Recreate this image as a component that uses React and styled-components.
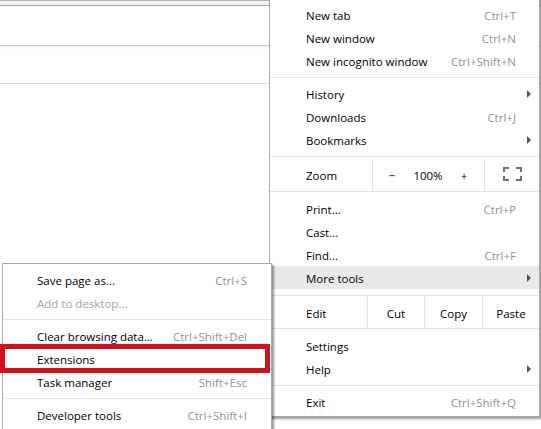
import styled, { createGlobalStyle } from "styled-components"

const GlobalStyle = createGlobalStyle`
    html, body {
        margin: 0;
        padding: 0;
        background: #fff;
    }
    body {
        width: 541px;
        height: 429px;
        overflow: hidden;
        font-family: "Open Sans", "Liberation Sans", sans-serif;
    }
`

const Screen = styled.div`
    position: relative;
    width: 541px;
    height: 429px;
    overflow: hidden;
    background: #fff;
`

const TabStrip = styled.div`
    height: 4px;
    background: #f2f2f2;
    border-top: 1px solid #b4b4b4;
    border-bottom: 1px solid #a4a4a4;
`

const Toolbar = styled.div`
    height: 39px;
    border-bottom: 1px solid #c6c6c6;
`

const BookmarkBar = styled.div`
    height: 37px;
    background: linear-gradient(#f1f1f1, #fff 3px);
    border-bottom: 1px solid #dcdcdc;
`

const Menu = styled.div`
    position: absolute;
    left: ${p => p.$left}px;
    top: ${p => p.$top}px;
    width: ${p => p.$width}px;
    z-index: ${p => p.$z};
    box-sizing: border-box;
    background: #fff;
    border: 1px solid #a9a9a9;
    box-shadow: 2px 2px 2px rgba(0, 0, 0, 0.4);
    padding: 4px 0 3px;
    font-size: 11.5px;
    color: #000;
`

const Item = styled.div`
    display: flex;
    align-items: center;
    height: 23px;
    box-sizing: border-box;
    padding-top: 2px;
    padding-left: ${p => p.$indent}px;
    background: ${p => (p.$active ? "#e9e9e9" : "transparent")};
    color: ${p => (p.$disabled ? "#a3a3a3" : "#000")};
    white-space: nowrap;
`

const Label = styled.span`
    flex: 1;
`

const Accel = styled.span`
    color: #929292;
`

const EndSlot = styled.span`
    display: flex;
    justify-content: flex-end;
    align-items: center;
    width: ${p => p.$w}px;
    padding-right: 8px;
    box-sizing: border-box;
    margin-top: -2px;
`

const Arrow = styled.span`
    width: 0;
    height: 0;
    border-left: 4px solid #545454;
    border-top: 4px solid transparent;
    border-bottom: 4px solid transparent;
`

const Separator = styled.div`
    height: 1px;
    background: #e5e5e5;
    margin: 5px 0 4px;
`

const ButtonRow = styled.div`
    display: flex;
    align-items: stretch;
    height: ${p => p.$h}px;
    margin: ${p => p.$mt}px 0 5px;
    box-sizing: border-box;
    border-top: 1px solid #e3e3e3;
    border-bottom: 1px solid #e3e3e3;
`

const RowLabel = styled.div`
    display: flex;
    align-items: center;
    width: ${p => p.$w}px;
    padding: 2px 0 0 36px;
    box-sizing: border-box;
`

const Cell = styled.div`
    display: flex;
    align-items: center;
    justify-content: center;
    flex: ${p => (p.$w ? "none" : 1)};
    width: ${p => (p.$w ? `${p.$w}px` : "auto")};
    padding-top: ${p => (p.$icon ? 0 : 2)}px;
    border-left: 1px solid #e3e3e3;
    box-sizing: border-box;
`

const ZoomControls = styled.div`
    display: grid;
    grid-template-columns: 36px 36px 36px;
    width: 100%;
    padding-left: 1px;
    box-sizing: border-box;
    text-align: center;
    align-items: center;
`

const Highlight = styled.div`
    position: absolute;
    left: 0;
    top: 344px;
    width: 270px;
    height: 29px;
    box-sizing: border-box;
    border: 5px solid #d1111c;
    z-index: 3;
`

function FullscreenIcon() {
    return (
        <svg width="19" height="14" viewBox="0 0 19 14" fill="none" stroke="#717171" strokeWidth="2">
            <path d="M1 5V1H6" />
            <path d="M13 1H18V5" />
            <path d="M1 9V13H6" />
            <path d="M13 13H18V9" />
        </svg>
    )
}

const mainTop = [
    ["New tab", "Ctrl+T"],
    ["New window", "Ctrl+N"],
    ["New incognito window", "Ctrl+Shift+N"],
]

const mainLists = [
    ["History", "", true],
    ["Downloads", "Ctrl+J"],
    ["Bookmarks", "", true],
]

const mainTools = [
    ["Print...", "Ctrl+P"],
    ["Cast...", ""],
    ["Find...", "Ctrl+F"],
    ["More tools", "", true, true],
]

function MenuItem({ label, accel, sub, active, disabled, indent, end }) {
    return (
        <Item $indent={indent} $active={active} $disabled={disabled}>
            <Label>{label}</Label>
            {accel && <Accel>{accel}</Accel>}
            <EndSlot $w={end}>{sub && <Arrow />}</EndSlot>
        </Item>
    )
}

function MainMenu() {
    const row = ([label, accel, sub, active]) => (
        <MenuItem key={label} label={label} accel={accel} sub={sub} active={active} indent={36} end={23} />
    )
    return (
        <Menu $left={269} $top={-2} $width={271} $z={1}>
            {mainTop.map(row)}
            <Separator />
            {mainLists.map(row)}
            <ButtonRow $h={36} $mt={5}>
                <RowLabel $w={102}>Zoom</RowLabel>
                <Cell $w={112}>
                    <ZoomControls>
                        <span>−</span>
                        <span>100%</span>
                        <span>+</span>
                    </ZoomControls>
                </Cell>
                <Cell $icon>
                    <FullscreenIcon />
                </Cell>
            </ButtonRow>
            {mainTools.map(row)}
            <ButtonRow $h={34} $mt={6}>
                <RowLabel $w={97}>Edit</RowLabel>
                <Cell $w={57}>Cut</Cell>
                <Cell $w={58}>Copy</Cell>
                <Cell>Paste</Cell>
            </ButtonRow>
            {row(["Settings", ""])}
            {row(["Help", "", true])}
            <Separator />
            {row(["Exit", "Ctrl+Shift+Q"])}
        </Menu>
    )
}

function MoreToolsMenu() {
    const row = (label, accel, disabled) => (
        <MenuItem label={label} accel={accel} disabled={disabled} indent={34} end={24} />
    )
    return (
        <Menu $left={2} $top={263} $width={270} $z={2}>
            {row("Save page as...", "Ctrl+S")}
            {row("Add to desktop...", "", true)}
            <Separator />
            {row("Clear browsing data...", "Ctrl+Shift+Del")}
            {row("Extensions", "")}
            {row("Task manager", "Shift+Esc")}
            <Separator />
            {row("Developer tools", "Ctrl+Shift+I")}
        </Menu>
    )
}

export default function App() {
    return (
        <Screen>
            <GlobalStyle />
            <TabStrip />
            <Toolbar />
            <BookmarkBar />
            <MainMenu />
            <MoreToolsMenu />
            <Highlight />
        </Screen>
    )
}
